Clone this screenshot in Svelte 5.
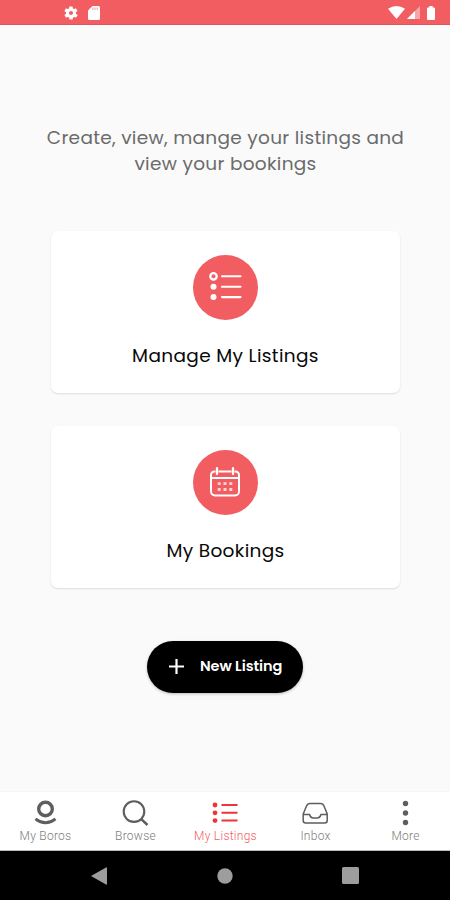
<script lang="ts">
  type Tab = { id: string; label: string };

  const tabs: Tab[] = [
    { id: 'boros', label: 'My Boros' },
    { id: 'browse', label: 'Browse' },
    { id: 'listings', label: 'My Listings' },
    { id: 'inbox', label: 'Inbox' },
    { id: 'more', label: 'More' },
  ];

  let active = $state('listings');
</script>

<div class="screen">
  <header class="status">
    <div class="status-group">
      <svg width="16" height="16" viewBox="0 0 24 24" fill="#fff" aria-hidden="true">
        <path d="M19.4 13a7.5 7.5 0 0 0 0-2l2.1-1.6c.2-.2.3-.4.1-.7l-2-3.4c-.1-.2-.4-.3-.6-.2l-2.5 1a7.3 7.3 0 0 0-1.7-1l-.4-2.6a.5.5 0 0 0-.5-.4h-4a.5.5 0 0 0-.5.4L9.1 5.1a7.3 7.3 0 0 0-1.7 1l-2.5-1c-.2-.1-.5 0-.6.2l-2 3.4c-.1.2-.1.5.1.7L4.6 11a7.5 7.5 0 0 0 0 2l-2.1 1.6c-.2.2-.3.4-.1.7l2 3.4c.1.2.4.3.6.2l2.5-1a7.3 7.3 0 0 0 1.7 1l.4 2.6c0 .3.2.4.5.4h4c.2 0 .5-.2.5-.4l.4-2.6a7.3 7.3 0 0 0 1.7-1l2.5 1c.2.1.5 0 .6-.2l2-3.4c.1-.2.1-.5-.1-.7zM12 15a3 3 0 1 1 0-6 3 3 0 0 1 0 6z" />
      </svg>
      <svg width="12" height="14" viewBox="0 0 12 14" aria-hidden="true">
        <path d="M4.5 0H10.5Q12 0 12 1.5V12.5Q12 14 10.5 14H1.5Q0 14 0 12.5V4.500z" fill="#fff" />
        <path d="M4.800 1.500v2.500M7 1.500v2.500M9.200 1.500v2.500" stroke="#f3a2a5" stroke-width="1.100" />
      </svg>
    </div>
    <div class="status-group right">
      <svg width="17" height="13" viewBox="0 0 17 13" aria-hidden="true">
        <path d="M0 2.800Q8.500-2.800 17 2.800L8.500 13z" fill="#fff" />
      </svg>
      <svg width="13" height="13" viewBox="0 0 13 13" aria-hidden="true">
        <path d="M13 0V13H0z" fill="#f6a6a9" />
        <path d="M8 5V13H0z" fill="#fff" />
      </svg>
      <svg class="battery" width="8" height="14" viewBox="0 0 8 14" aria-hidden="true">
        <path d="M2.300 0h3.400v1.500H7q1 0 1 1V13q0 1-1 1H1q-1 0-1-1V2.500q0-1 1-1h1.300z" fill="#fff" />
      </svg>
    </div>
  </header>

  <main>
    <p class="intro">Create, view, mange your listings and<br />view your bookings</p>

    <div class="cards">
      <button type="button" class="card">
        <span class="disc">
          <svg width="34" height="30" viewBox="0 0 34 30" fill="none" stroke="#fff" aria-hidden="true">
            <circle cx="5.500" cy="4.300" r="3.200" stroke-width="2.300" />
            <circle cx="5.500" cy="14.700" r="3" fill="#fff" stroke="none" />
            <circle cx="5.500" cy="25.100" r="3" fill="#fff" stroke="none" />
            <path d="M14 4.300H32.500M14 14.700H32.500M14 25.100H32.500" stroke-width="2.100" stroke-linecap="round" />
          </svg>
        </span>
        <span class="title">Manage My Listings</span>
      </button>

      <button type="button" class="card">
        <span class="disc">
          <svg width="30" height="30" viewBox="0 0 30 30" fill="none" stroke="#fff" aria-hidden="true">
            <path d="M5.500 4.500H4.500a3.500 3.500 0 0 0-3.500 3.500V24.500a4 4 0 0 0 4 4H25a4 4 0 0 0 4-4V8a3.500 3.500 0 0 0-3.500-3.500H24.500M8.500 4.500H21.500M1 11H29" stroke-width="2" />
            <path d="M7 1.200V7M23 1.200V7" stroke-width="2.300" stroke-linecap="round" />
            <path d="M7.700 16.700H10.700M13.500 16.700H16.500M19.300 16.700H22.300M7.700 22.500H10.700M13.500 22.500H16.500M19.300 22.500H22.300" stroke="#fbd3d4" stroke-width="2.800" />
          </svg>
        </span>
        <span class="title">My Bookings</span>
      </button>
    </div>

    <button type="button" class="new">
      <svg width="15" height="15" viewBox="0 0 15 15" aria-hidden="true">
        <path d="M7.500 0V15M0 7.500H15" stroke="#fff" stroke-width="2.200" />
      </svg>
      <span>New Listing</span>
    </button>
  </main>

  <nav class="tabs">
    {#each tabs as tab}
      <button type="button" class="tab" class:active={active === tab.id} onclick={() => (active = tab.id)}>
        <svg width="28" height="28" viewBox="0 0 28 28" fill="none" stroke="currentColor" aria-hidden="true">
          {#if tab.id === 'boros'}
            <circle cx="14.500" cy="10" r="6.800" stroke-width="3.400" />
            <path d="M4.500 19.800Q14.500 27.800 24.500 19.800" stroke-width="2.900" />
          {:else if tab.id === 'browse'}
            <circle cx="13" cy="12.600" r="10.300" stroke-width="2.100" />
            <path d="M20 19.800L26.500 26" stroke-width="2.500" />
          {:else if tab.id === 'listings'}
            <path d="M10.500 6H26.500M10.500 13.800H26.500M10.500 21.600H26.500" stroke-width="2" />
            <circle cx="4" cy="6" r="2.400" fill="currentColor" stroke="none" />
            <circle cx="4" cy="13.800" r="2.400" fill="currentColor" stroke="none" />
            <circle cx="4" cy="21.600" r="2.400" fill="currentColor" stroke="none" />
          {:else if tab.id === 'inbox'}
            <path d="M2.200 15L5.500 7Q6.500 4.500 9 4.500H19.500Q22 4.500 23 7L26.200 15V21.500Q26.200 24 23.700 24H4.700Q2.200 24 2.200 21.500ZM2.200 15.500H8.500Q9.500 19 12 19H16.500Q19 19 20 15.500H26" stroke-width="1.500" />
          {:else}
            <circle cx="14.500" cy="4.500" r="2.700" fill="currentColor" stroke="none" />
            <circle cx="14.500" cy="14" r="2.700" fill="currentColor" stroke="none" />
            <circle cx="14.500" cy="23.500" r="2.700" fill="currentColor" stroke="none" />
          {/if}
        </svg>
        <span>{tab.label}</span>
      </button>
    {/each}
  </nav>

  <footer class="system">
    <svg width="16" height="18" viewBox="0 0 16 18" aria-hidden="true"><path d="M0 9L15 .5Q16 0 16 1V17Q16 18 15 17.500z" /></svg>
    <svg width="16" height="16" viewBox="0 0 16 16" aria-hidden="true"><circle cx="8" cy="8" r="7.700" /></svg>
    <svg width="17" height="17" viewBox="0 0 17 17" aria-hidden="true"><rect width="17" height="17" rx="1.500" /></svg>
  </footer>
</div>

<style>
  :global(body) {
    margin: 0;
    background: #fafafa;
  }

  .screen {
    display: flex;
    flex-direction: column;
    height: 900px;
    overflow: hidden;
    background: #fafafa;
    font-family: Poppins, Inter, sans-serif;
  }

  button {
    margin: 0;
    border: 0;
    padding: 0;
    background: none;
    font: inherit;
    cursor: pointer;
  }

  svg {
    display: block;
    flex: none;
  }

  .status {
    display: flex;
    box-sizing: border-box;
    align-items: center;
    justify-content: space-between;
    height: 25px;
    border-bottom: 1px solid #dc5558;
    padding: 1px 15px 0 63px;
    background: #f15d61;
  }

  .status-group {
    display: flex;
    gap: 9px;
    align-items: center;
  }

  .right {
    gap: 2px;
  }

  .battery {
    margin-left: 5px;
  }

  main {
    display: flex;
    flex: 1;
    flex-direction: column;
    align-items: center;
    padding-top: 100px;
  }

  .intro {
    margin: 0;
    padding-left: 1px;
    color: #6b6b6b;
    font-size: 18.5px;
    letter-spacing: 0.3px;
    line-height: 26px;
    text-align: center;
    white-space: nowrap;
  }

  .cards {
    display: grid;
    gap: 33px;
    margin-top: 53.5px;
  }

  .card {
    display: flex;
    box-sizing: border-box;
    flex-direction: column;
    gap: 22px;
    align-items: center;
    width: 349px;
    height: 162px;
    border-radius: 7px;
    padding-top: 24px;
    background: #ffffff;
    box-shadow: 0 1px 2px rgba(0, 0, 0, 0.12);
  }

  .disc {
    display: grid;
    place-items: center;
    width: 65px;
    height: 65px;
    border-radius: 50%;
    background: #f15d61;
  }

  .title {
    padding-left: 1px;
    color: #080808;
    font-size: 18.5px;
    letter-spacing: 0.35px;
    line-height: 28px;
    white-space: nowrap;
  }

  .new {
    display: flex;
    box-sizing: border-box;
    gap: 16px;
    align-items: center;
    width: 156px;
    height: 52px;
    margin-top: 53px;
    border-radius: 26px;
    padding-left: 22px;
    background: #000000;
    color: #ffffff;
    box-shadow: 0 1px 3px rgba(0, 0, 0, 0.25);
    font-size: 14.5px;
    font-weight: 600;
    letter-spacing: -0.05px;
    white-space: nowrap;
  }

  .tabs {
    display: grid;
    box-sizing: border-box;
    grid-template-columns: repeat(5, 1fr);
    height: 60px;
    border-top: 1px solid #f5f5f5;
    border-bottom: 1px solid #bdbdbd;
    padding-top: 7px;
    background: #ffffff;
  }

  .tab {
    display: flex;
    flex-direction: column;
    align-items: center;
    color: #5e5e5e;
  }

  .tab span {
    margin-top: 2px;
    padding-left: 1px;
    color: #7c7c7c;
    font-family: Roboto, sans-serif;
    font-size: 12px;
    font-weight: 300;
    letter-spacing: 0.25px;
    line-height: 14px;
    white-space: nowrap;
  }

  .active {
    color: #ec3439;
  }

  .active span {
    color: #f15d61;
  }

  .system {
    display: flex;
    align-items: center;
    justify-content: space-between;
    height: 49px;
    padding: 0 91px;
    background: #000000;
    fill: #9d9d9d;
  }
</style>
